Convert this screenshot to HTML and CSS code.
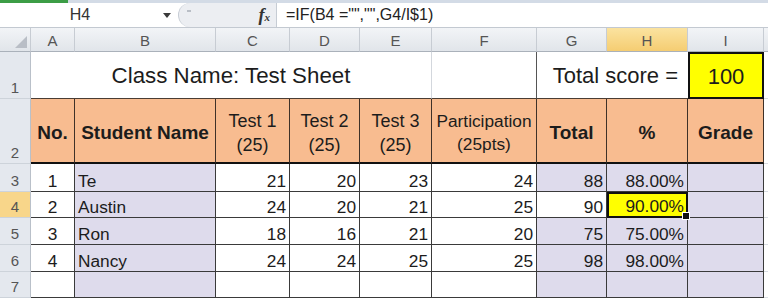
FILE: index.html
```html
<!DOCTYPE html>
<html>
<head>
<meta charset="utf-8">
<link rel="stylesheet" href="styles.css">
</head>
<body>
<div class="app">
  <div class="topstrip"><div class="green"></div></div>
  <div class="fbar">
    <div class="namebox"><span class="name">H4</span><span class="dd"></span></div>
    <div class="fxzone"><span class="dash"></span><span class="fx">f<span class="fxx">x</span></span></div>
    <div class="formula">=IF(B4 ="","",G4/I$1)</div>
  </div>
  <div class="sheet">
    <!-- column headers -->
    <div class="ch corner"><span class="tri"></span></div>
    <div class="ch">A</div>
    <div class="ch">B</div>
    <div class="ch">C</div>
    <div class="ch">D</div>
    <div class="ch">E</div>
    <div class="ch">F</div>
    <div class="ch">G</div>
    <div class="ch sel">H</div>
    <div class="ch">I</div>
    <div class="ch jh"></div>

    <!-- row 1 -->
    <div class="rh">1</div>
    <div class="c title">Class Name: Test Sheet</div>
    <div class="c r1f"></div>
    <div class="c r1gh">Total score =</div>
    <div class="c r1i">100</div>
    <div class="c j"></div>

    <!-- row 2 -->
    <div class="rh">2</div>
    <div class="c hd b">No.</div>
    <div class="c hd b">Student Name</div>
    <div class="c hd">Test 1<br>(25)</div>
    <div class="c hd">Test 2<br>(25)</div>
    <div class="c hd">Test 3<br>(25)</div>
    <div class="c hd part">Participation<br>(25pts)</div>
    <div class="c hd b">Total</div>
    <div class="c hd b">%</div>
    <div class="c hd b">Grade</div>
    <div class="c j"></div>

    <!-- row 3 -->
    <div class="rh">3</div>
    <div class="c ctr">1</div>
    <div class="c lav">Te</div>
    <div class="c rt">21</div>
    <div class="c rt">20</div>
    <div class="c rt">23</div>
    <div class="c rt">24</div>
    <div class="c rt lav">88</div>
    <div class="c rt lav">88.00%</div>
    <div class="c lav"></div>
    <div class="c j"></div>

    <!-- row 4 -->
    <div class="rh sel">4</div>
    <div class="c ctr">2</div>
    <div class="c lav">Austin</div>
    <div class="c rt">24</div>
    <div class="c rt">20</div>
    <div class="c rt">21</div>
    <div class="c rt">25</div>
    <div class="c rt">90</div>
    <div class="c rt active">90.00%</div>
    <div class="c lav"></div>
    <div class="c j"></div>

    <!-- row 5 -->
    <div class="rh">5</div>
    <div class="c ctr">3</div>
    <div class="c lav">Ron</div>
    <div class="c rt">18</div>
    <div class="c rt">16</div>
    <div class="c rt">21</div>
    <div class="c rt">20</div>
    <div class="c rt lav">75</div>
    <div class="c rt lav">75.00%</div>
    <div class="c lav"></div>
    <div class="c j"></div>

    <!-- row 6 -->
    <div class="rh">6</div>
    <div class="c ctr">4</div>
    <div class="c lav">Nancy</div>
    <div class="c rt">24</div>
    <div class="c rt">24</div>
    <div class="c rt">25</div>
    <div class="c rt">25</div>
    <div class="c rt lav">98</div>
    <div class="c rt lav">98.00%</div>
    <div class="c lav"></div>
    <div class="c j"></div>

    <!-- row 7 -->
    <div class="rh">7</div>
    <div class="c"></div>
    <div class="c lav"></div>
    <div class="c"></div>
    <div class="c"></div>
    <div class="c"></div>
    <div class="c"></div>
    <div class="c lav"></div>
    <div class="c lav"></div>
    <div class="c lav"></div>
    <div class="c j"></div>
  </div>
</div>
</body>
</html>
```

FILE: styles.css
```css
* { box-sizing: border-box; }
html, body { margin: 0; padding: 0; }
body {
  width: 768px;
  height: 299px;
  overflow: hidden;
  background: #fff;
  font-family: "Liberation Sans", Arial, sans-serif;
}
.app { width: 768px; height: 299px; overflow: hidden; }

.topstrip { height: 3px; background: #d3dbe6; display: flex; }
.topstrip .green { width: 68px; background: #3c9d46; }

.fbar {
  height: 25px;
  display: flex;
  border-bottom: 1px solid #c3c9d1;
  background: #fff;
}
.namebox { width: 178px; display: flex; align-items: center; }
.name { width: 160px; text-align: center; font-size: 16px; color: #333; }
.dd {
  width: 0; height: 0;
  border-left: 4px solid transparent;
  border-right: 4px solid transparent;
  border-top: 5px solid #3a3a3a;
  margin-left: 3px;
}
.fxzone {
  width: 98px;
  background: #eceef2;
  border-left: 1px solid #c6ccd4;
  border-radius: 13px 0 0 13px;
  display: flex;
  align-items: center;
  padding-left: 8px;
}
.dash { width: 4px; height: 2px; background: #b9bec6; margin-top: -8px; }
.fx {
  margin-left: auto;
  margin-right: 6px;
  font-family: "Liberation Serif", serif;
  font-style: italic;
  font-weight: bold;
  font-size: 18px;
  color: #333;
}
.fxx { font-size: 11px; }
.formula {
  flex: 1;
  border-left: 1px solid #c6ccd4;
  padding-left: 9px;
  font-size: 16px;
  color: #222;
  display: flex;
  align-items: center;
}

.sheet {
  display: grid;
  grid-template-columns: 31px 44px 141px 74px 70px 72px 105px 70px 81px 76px 1fr;
  grid-template-rows: 24px 47px 65px 28px 26px 27px 27px 26px;
}

.ch {
  background: linear-gradient(#f2f4f7, #e1e5ea);
  border-right: 1px solid #c7ccd3;
  border-bottom: 1px solid #aab1ba;
  display: flex;
  align-items: center;
  justify-content: center;
  font-size: 15px;
  color: #555;
  padding-top: 1px;
}
.ch.sel { background: linear-gradient(#fbe3a0, #f5cd72); color: #555; }
.ch.jh { border-right: none; }
.corner { justify-content: flex-end; align-items: flex-end; padding: 0 3px 3px 0; }
.tri {
  width: 12px; height: 12px;
  background: #b9bec6;
  clip-path: polygon(100% 0, 100% 100%, 0 100%);
}

.rh {
  background: #e4e8ee;
  border-right: 1px solid #b9c0c9;
  border-bottom: 1px solid #cdd3da;
  display: flex;
  align-items: flex-end;
  justify-content: center;
  font-size: 15px;
  line-height: 17px;
  color: #555;
  padding-bottom: 2px;
}
.rh.sel { background: #f8d68a; }

.c {
  display: flex;
  align-items: flex-end;
  justify-content: flex-start;
  padding: 0 3px;
  border-right: 1px solid #3a3a3a;
  border-bottom: 1px solid #3a3a3a;
  font-size: 17.3px;
  line-height: 19px;
  color: #1c1c1c;
  background: #fff;
  white-space: nowrap;
}
.ctr { justify-content: center; }
.rt { justify-content: flex-end; }
.lav { background: #dedbec; }

.title {
  grid-column: span 5;
  justify-content: center;
  align-items: center;
  font-size: 22.3px;
  line-height: 26px;
  border-right: 1px solid #d3d7dd;
  border-bottom: 1px solid #4a3d34;
  padding-top: 2px;
}
.r1f { border-right: 1px solid #555; border-bottom: 1px solid #4a3d34; }
.r1gh {
  grid-column: span 2;
  justify-content: flex-end;
  align-items: center;
  font-size: 22px;
  line-height: 26px;
  padding: 2px 10px 0 0;
  border-right: none;
  border-bottom: 1px solid #4a3d34;
}
.r1i {
  background: #ffff00;
  border: 2px solid #111;
  justify-content: center;
  align-items: center;
  font-size: 22px;
  line-height: 26px;
  padding-top: 2px;
}

.hd {
  background: #f8bc90;
  justify-content: center;
  align-items: center;
  text-align: center;
  font-size: 18px;
  line-height: 24px;
  padding-top: 5px;
  border-right: 1px solid #3f3128;
  border-bottom: 2px solid #111;
  white-space: normal;
}
.hd.b { font-weight: bold; font-size: 19px; }
.hd.part { font-size: 17.3px; line-height: 23px; padding: 5px 0 0 0; }

.j {
  border-right: none;
  border-bottom: 1px solid #d9dde3;
  background: #fff;
}

.active {
  background: #ffff00;
  border: 2px solid #111;
  position: relative;
  padding-right: 2px;
}
.active::after {
  content: "";
  position: absolute;
  right: -4px;
  bottom: -4px;
  width: 6px;
  height: 6px;
  background: #111;
  border: 1px solid #fff;
  z-index: 2;
}
```
